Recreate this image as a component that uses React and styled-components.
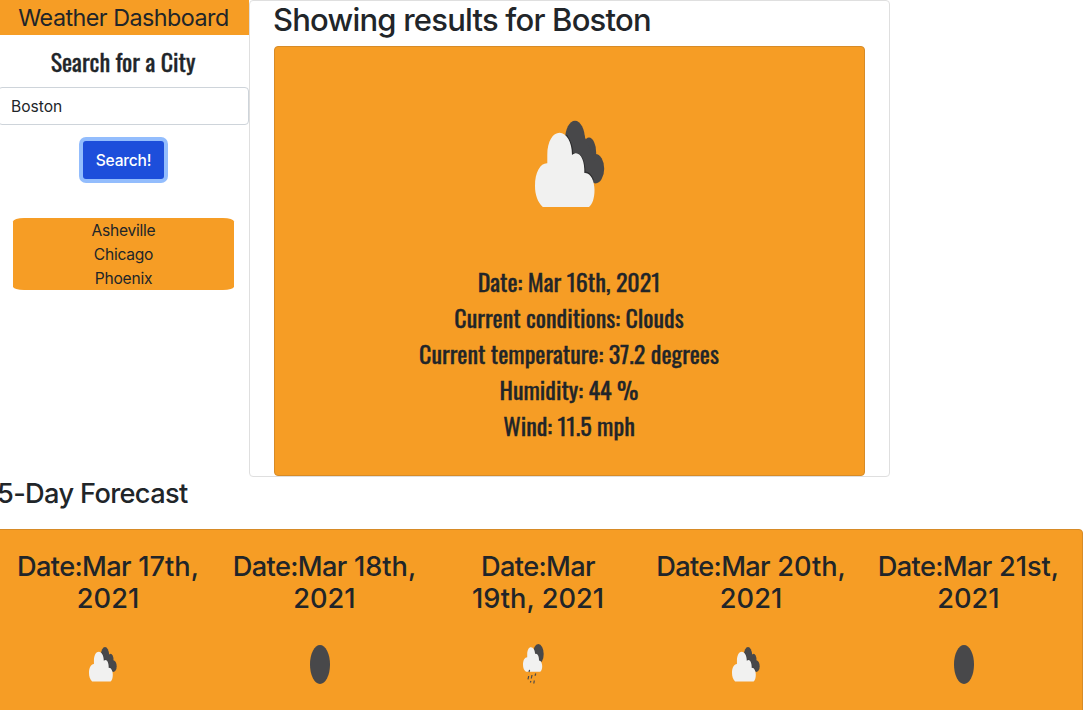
import React from 'react';
import styled, { createGlobalStyle } from 'styled-components';

const orange = '#f69d25';
const ink = '#212529';

const GlobalStyle = createGlobalStyle`
  * { box-sizing: border-box; }
  html, body { margin: 0; background: #fff; overflow: hidden; }
  body { font-family: Inter, 'Liberation Sans', sans-serif; font-size: 15.6px; line-height: 24px; color: ${ink}; }
`;

const Page = styled.div`
  height: 710px;
  width: 1086px;
  overflow: hidden;
`;

const Top = styled.div`
  display: flex;
  height: 477px;
`;

const Sidebar = styled.aside`
  width: 249px;
  display: flex;
  flex-direction: column;
  align-items: center;
`;

const Brand = styled.h1`
  align-self: stretch;
  height: 35px;
  margin: 0;
  padding-right: 2px;
  background: ${orange};
  font-size: 23.3px;
  font-weight: 400;
  line-height: 35px;
  letter-spacing: -0.52px;
  text-align: center;
`;

const SearchTitle = styled.h2`
  margin: 8px 3px 8px 0;
  font-family: Oswald, 'Roboto Condensed', Roboto, sans-serif;
  font-size: 24px;
  font-weight: 400;
  line-height: 36px;
  -webkit-text-stroke: 0.35px ${ink};
`;

const CityInput = styled.input`
  width: 251px;
  height: 38px;
  margin-left: -2px;
  padding: 6px 12px;
  border: 1px solid #ced4da;
  border-radius: 4px;
  background: #fff;
  color: ${ink};
  font: inherit;
  outline: none;
`;

const SearchButton = styled.button`
  height: 38px;
  width: 81px;
  margin: 16px 2px 39px 0;
  padding: 2px 0 0;
  border: 0;
  border-radius: 3px;
  background: #1d4edb;
  box-shadow: 0 0 0 4px #93bdfd;
  color: #fff;
  font: inherit;
  font-weight: 500;
  letter-spacing: -0.2px;
`;

const History = styled.ul`
  width: 221px;
  height: 72px;
  margin: 0 2px 0 0;
  padding: 1px 0 0;
  list-style: none;
  background: ${orange};
  border-radius: 5%;
  text-align: center;
  letter-spacing: -0.25px;
`;

const Results = styled.section`
  width: 641px;
  padding: 0 24px;
  border: 1px solid #dfdfdf;
  border-radius: 4px;
`;

const ResultsTitle = styled.h2`
  height: 45px;
  margin: 0 0 0 -1px;
  font-size: 31px;
  font-weight: 500;
  line-height: 38px;
  letter-spacing: -0.79px;
  white-space: nowrap;
`;

const Current = styled.div`
  height: 430px;
  display: flex;
  flex-direction: column;
  align-items: center;
  padding-top: 74px;
  border: 1px solid #d78b27;
  border-radius: 4px;
  background: ${orange};
`;

const Facts = styled.div`
  margin: 55px 1px 0 0;
  font-family: Oswald, 'Roboto Condensed', Roboto, sans-serif;
  font-size: 24px;
  line-height: 36px;
  text-align: center;
  -webkit-text-stroke: 0.35px ${ink};
`;

const ForecastTitle = styled.h2`
  height: 52px;
  margin: 0 0 0 -3px;
  font-size: 27.2px;
  font-weight: 500;
  line-height: 34px;
  letter-spacing: -0.65px;
`;

const Forecast = styled.section`
  width: 1087px;
  height: 240px;
  margin-left: -4px;
  padding: 21px 0 0 3px;
  display: grid;
  grid-template-columns: 216px 217px 210px 216px 219px;
  border: 1px solid #d78b27;
  border-radius: 4px;
  background: ${orange};
`;

const Day = styled.div`
  display: flex;
  flex-direction: column;
  align-items: center;
`;

const DayDate = styled.h3`
  margin: 0;
  font-size: 27.2px;
  font-weight: 500;
  line-height: 32px;
  text-align: center;
  white-space: nowrap;
`;

const Month = styled.span`
  letter-spacing: -0.65px;
`;

const IconSlot = styled.div`
  display: flex;
  align-items: center;
  justify-content: center;
  height: 40px;
  margin: 29px 10px 0 0;
`;

const Icon = styled.svg`
  display: block;
  overflow: visible;
`;

const Clouds = ({ width, height }) => (
  <Icon width={width} height={height} viewBox="0 0 70 87">
    <g fill="#48484a">
      <ellipse cx="40" cy="19" rx="10" ry="19.3" />
      <ellipse cx="54" cy="32" rx="7.2" ry="15.5" />
      <ellipse cx="60.5" cy="47.7" rx="8.7" ry="14.7" />
      <path d="M32 14H49L60 40V60H50L34 36Z" />
    </g>
    <path d="M31.5 14Q38 24 37.6 33Q49 30 50 51Q55 51 58.3 59" fill="none" stroke="#2c2c2d" strokeWidth="1.2" />
    <path
      d="M7.8 86C2.5 81 0 73.5 0 65C0 51 5.5 42 12.3 42.3V34C12.3 20 18 11.7 24.6 11.7C31.5 11.7 37 21 37 34C44 28 50 38 49.3 52C55.5 51 59.5 60 59.5 69C59.5 77 57.5 83 54 86Z"
      fill="#f1f1f0"
    />
  </Icon>
);

const Overcast = () => (
  <Icon width="20" height="39" viewBox="0 0 20 39">
    <ellipse cx="10" cy="19.5" rx="10" ry="19.5" fill="#48484a" />
  </Icon>
);

const Rain = () => (
  <Icon width="21" height="40" viewBox="0 0 21 40">
    <ellipse cx="15.3" cy="10" rx="5.4" ry="10" fill="#48484a" />
    <path
      d="M3 27.8C1 26.5 0 24 0 20.8C0 16 1.8 13.2 4.2 13.2V10.5C4.2 6 5.8 3.3 8 3.3C10.3 3.3 12.1 6.5 12.1 10C14.5 9 16.2 12.5 16 16.5C18 16.5 19.2 19.5 19.2 22.3C19.2 25 18.4 27 17.2 27.8Z"
      fill="#f1f1f0"
    />
    <path
      d="M6.6 25.8L6 28M5.7 32L5 35.3M9 31L8.3 34.5M12.8 29.5L12 31.8M7.9 37L7.4 38.5M11.3 36.5L10.8 39.5"
      fill="none"
      stroke="#48484a"
      strokeWidth="1.2"
    />
  </Icon>
);

const smallIcons = {
  clouds: <Clouds width={28} height={35} />,
  overcast: <Overcast />,
  rain: <Rain />,
};

const days = [
  { first: '17th,', second: '2021', icon: 'clouds' },
  { first: '18th,', second: '2021', icon: 'overcast' },
  { first: '', second: '19th, 2021', icon: 'rain' },
  { first: '20th,', second: '2021', icon: 'clouds' },
  { first: '21st,', second: '2021', icon: 'overcast' },
];

const facts = [
  'Date: Mar 16th, 2021',
  'Current conditions: Clouds',
  'Current temperature: 37.2 degrees',
  'Humidity: 44 %',
  'Wind: 11.5 mph',
];

export default function App() {
  return (
    <Page>
      <GlobalStyle />
      <Top>
        <Sidebar>
          <Brand>Weather Dashboard</Brand>
          <SearchTitle>Search for a City</SearchTitle>
          <CityInput defaultValue="Boston" />
          <SearchButton>Search!</SearchButton>
          <History>
            {['Asheville', 'Chicago', 'Phoenix'].map((city) => (
              <li key={city}>{city}</li>
            ))}
          </History>
        </Sidebar>
        <Results>
          <ResultsTitle>Showing results for Boston</ResultsTitle>
          <Current>
            <Clouds width={70} height={87} />
            <Facts>
              {facts.map((fact) => (
                <div key={fact}>{fact}</div>
              ))}
            </Facts>
          </Current>
        </Results>
      </Top>
      <ForecastTitle>5-Day Forecast</ForecastTitle>
      <Forecast>
        {days.map((day) => (
          <Day key={day.first + day.second}>
            <DayDate>
              <Month>Date:Mar</Month> {day.first}
              <br />
              {day.second}
            </DayDate>
            <IconSlot>{smallIcons[day.icon]}</IconSlot>
          </Day>
        ))}
      </Forecast>
    </Page>
  );
}
